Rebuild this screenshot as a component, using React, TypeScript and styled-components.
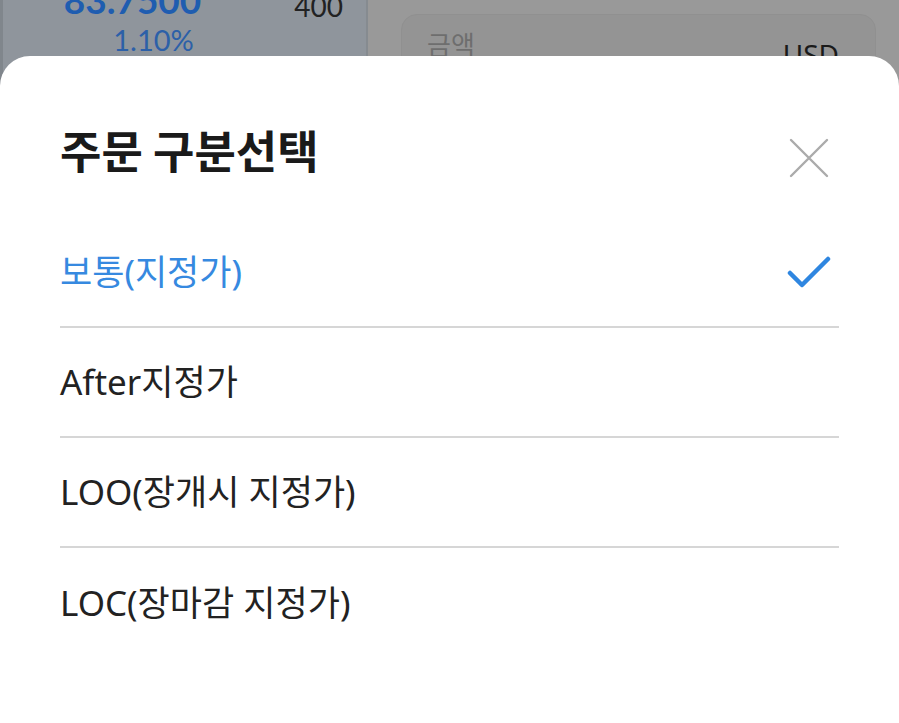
import React from "react";
import styled, { createGlobalStyle } from "styled-components";

const Global = createGlobalStyle`
  html, body { margin: 0; padding: 0; }
  body {
    width: 899px;
    height: 723px;
    overflow: hidden;
    font-family: "Noto Sans", "Noto Sans CJK KR", sans-serif;
    background: #999999;
  }
`;

const Screen = styled.div`
  position: relative;
  width: 899px;
  height: 723px;
  overflow: hidden;
`;

/* dimmed page lying behind the bottom sheet */
const Backdrop = styled.div`
  display: grid;
  grid-template-columns: 368px 1fr;
  height: 100%;
`;

const QuotePanel = styled.div`
  background: #8f959c;
  border-left: 3px solid #80868c;
  border-right: 2px solid #868b90;
  display: grid;
  grid-template-columns: 1fr 110px;
  align-content: start;
`;

const PriceCol = styled.div`
  display: flex;
  flex-direction: column;
  align-items: center;
  margin-top: -21px;
`;

const Price = styled.div`
  font-family: Lato, "Noto Sans", sans-serif;
  font-weight: 700;
  font-size: 37px;
  line-height: 42px;
  color: #1f5db0;
  margin-left: 6px;
`;

const Rate = styled.div`
  font-family: Lato, "Noto Sans", sans-serif;
  font-size: 29px;
  line-height: 34px;
  margin-top: 2px;
  color: #2c60a8;
  margin-left: 48px;
`;

const Qty = styled.div`
  font-family: Lato, "Noto Sans", sans-serif;
  font-size: 28px;
  line-height: 32px;
  color: #222222;
  margin-top: -10px;
  text-align: right;
  padding-right: 23px;
`;

const OrderPanel = styled.div`
  background: #999999;
  padding: 14px 23px 0 33px;
`;

const AmountCard = styled.div`
  background: #949494;
  border: 1px solid #909090;
  border-radius: 16px;
  height: 120px;
  padding: 12px 36px 0 25px;
  display: flex;
  justify-content: space-between;
  align-items: flex-start;
`;

const Label = styled.span`
  font-family: "Noto Sans CJK KR", sans-serif;
  font-size: 26px;
  line-height: 34px;
  color: #6e6e6e;
`;

const Currency = styled.span`
  font-family: "Noto Sans", sans-serif;
  font-size: 28px;
  line-height: 36px;
  color: #1a1a1a;
  margin-top: 9px;
`;

const Sheet = styled.div`
  position: absolute;
  left: 0;
  right: 0;
  top: 56px;
  bottom: 0;
  background: #ffffff;
  border-radius: 30px 30px 0 0;
  padding: 0 60px;
  display: flex;
  flex-direction: column;
`;

const SheetHeader = styled.div`
  display: flex;
  align-items: flex-start;
  justify-content: space-between;
  height: 162px;
  padding-top: 66px;
  box-sizing: border-box;
`;

const Title = styled.h2`
  margin: 0;
  font-family: "Noto Sans CJK KR", sans-serif;
  font-weight: 700;
  font-size: 45px;
  line-height: 56px;
  color: #1a1a1a;
`;

const CloseButton = styled.button`
  border: none;
  background: none;
  padding: 0;
  margin: 11px 5px 0 0;
  width: 50px;
  height: 50px;
  display: flex;
  align-items: center;
  justify-content: center;
  cursor: pointer;
`;

const OptionList = styled.ul`
  list-style: none;
  margin: 0;
  padding: 0;
`;

const Option = styled.li<{ $last?: boolean }>`
  height: 110px;
  display: flex;
  align-items: center;
  justify-content: space-between;
  border-bottom: ${(p) => (p.$last ? "none" : "2px solid #d6d6d6")};
  box-sizing: border-box;
`;

const OptionText = styled.span<{ $active?: boolean }>`
  font-family: "Noto Sans", "Noto Sans CJK KR", sans-serif;
  font-size: 35px;
  line-height: 44px;
  color: ${(p) => (p.$active ? "#3689e0" : "#222222")};
`;

const CheckIcon = styled.svg`
  margin-right: 8px;
`;

const options = ["보통(지정가)", "After지정가", "LOO(장개시 지정가)", "LOC(장마감 지정가)"];

export default function App() {
  return (
    <>
      <Global />
      <Screen>
        <Backdrop>
          <QuotePanel>
            <PriceCol>
              <Price>83.7500</Price>
              <Rate>1.10%</Rate>
            </PriceCol>
            <Qty>400</Qty>
          </QuotePanel>
          <OrderPanel>
            <AmountCard>
              <Label>금액</Label>
              <Currency>USD</Currency>
            </AmountCard>
          </OrderPanel>
        </Backdrop>
        <Sheet>
          <SheetHeader>
            <Title>주문 구분선택</Title>
            <CloseButton aria-label="닫기">
              <svg width="40" height="40" viewBox="0 0 40 40">
                <path d="M2 2 L38 38 M38 2 L2 38" stroke="#ababab" strokeWidth="2.4" strokeLinecap="round" />
              </svg>
            </CloseButton>
          </SheetHeader>
          <OptionList>
            {options.map((o, i) => (
              <Option key={o} $last={i === options.length - 1}>
                <OptionText $active={i === 0}>{o}</OptionText>
                {i === 0 && (
                  <CheckIcon width="44" height="34" viewBox="0 0 44 34">
                    <path d="M3 18 L15 30 L41 4" fill="none" stroke="#2f86e0" strokeWidth="4.5" strokeLinecap="round" strokeLinejoin="round" />
                  </CheckIcon>
                )}
              </Option>
            ))}
          </OptionList>
        </Sheet>
      </Screen>
    </>
  );
}
